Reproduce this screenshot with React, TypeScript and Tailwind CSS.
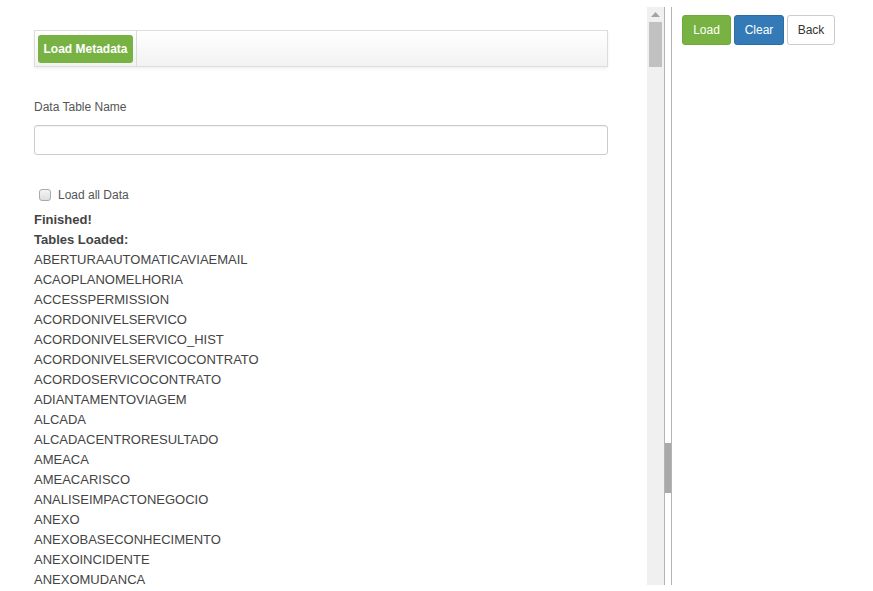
import React from 'react';

const tables = [
  'ABERTURAAUTOMATICAVIAEMAIL',
  'ACAOPLANOMELHORIA',
  'ACCESSPERMISSION',
  'ACORDONIVELSERVICO',
  'ACORDONIVELSERVICO_HIST',
  'ACORDONIVELSERVICOCONTRATO',
  'ACORDOSERVICOCONTRATO',
  'ADIANTAMENTOVIAGEM',
  'ALCADA',
  'ALCADACENTRORESULTADO',
  'AMEACA',
  'AMEACARISCO',
  'ANALISEIMPACTONEGOCIO',
  'ANEXO',
  'ANEXOBASECONHECIMENTO',
  'ANEXOINCIDENTE',
  'ANEXOMUDANCA',
];

const App: React.FC = () => {
  return (
    <div className="w-[873px] h-[591px] overflow-hidden bg-white flex font-['Liberation_Sans',Arial,sans-serif]">
      {/* Loader frame */}
      <div className="mt-[7px] h-[578px] flex">
        <div className="w-[647px] h-full overflow-hidden pl-[34px] pr-[39px] pt-[23px]">
          {/* Toolbar */}
          <div className="h-[37px] flex items-stretch border border-[#dcdcdc] bg-gradient-to-b from-white to-[#f2f2f2] shadow-[0_2px_3px_rgba(0,0,0,0.06)]">
            <div className="py-[4px] pl-[3px] pr-[3px] border-r border-[#dcdcdc]">
              <button className="h-[28px] w-[95px] rounded-[3px] bg-[#78b242] text-white text-[12px] font-bold">
                Load Metadata
              </button>
            </div>
          </div>

          <label className="block mt-[32px] h-[17px] leading-[17px] text-[12px] text-[#555]">Data Table Name</label>
          <input
            type="text"
            className="mt-[9px] block w-full h-[30px] rounded-[3px] border border-[#ccc] shadow-[inset_0_1px_1px_rgba(0,0,0,0.06)]"
          />

          <label className="mt-[30px] h-[20px] flex items-center text-[12px] text-[#555]">
            <span className="ml-[5px] mr-[7px] w-[12px] h-[12px] rounded-[3px] border border-[#aaa] bg-gradient-to-b from-[#f4f4f4] to-[#dedede]" />
            Load all Data
          </label>

          <div className="mt-[5px] text-[13px] leading-[20px] text-[#444]">
            <div className="font-bold">Finished!</div>
            <div className="font-bold">Tables Loaded:</div>
            {tables.map((t) => (
              <div key={t}>{t}</div>
            ))}
          </div>
        </div>

        {/* Frame scrollbar */}
        <div className="w-[17px] h-full bg-[#f0f0f0] flex flex-col items-center">
          <svg width="9" height="5" viewBox="0 0 9 5" className="mt-[5px]">
            <polygon points="4.5,0 9,5 0,5" fill="#a3a3a3" />
          </svg>
          <div className="mt-[5px] w-[13px] h-[45px] bg-[#c1c1c1]" />
        </div>

        {/* Splitter */}
        <div className="w-[8px] h-full border-l border-r border-[#b4b4b4] bg-white">
          <div className="mt-[436px] h-[50px] bg-[#a9a9a9]" />
        </div>
      </div>

      {/* Actions */}
      <div className="flex-1 pl-[10px] pt-[15px]">
        <div className="flex gap-[3px]">
          <button className="h-[30px] w-[49px] rounded-[3px] bg-[#78b242] border border-[#6fa83b] text-white text-[12px]">
            Load
          </button>
          <button className="h-[30px] w-[50px] rounded-[3px] bg-[#337ab7] border border-[#2e6da4] text-white text-[12px]">
            Clear
          </button>
          <button className="h-[30px] w-[48px] rounded-[3px] bg-white border border-[#ccc] text-[#333] text-[12px]">
            Back
          </button>
        </div>
      </div>
    </div>
  );
};

export default App;
